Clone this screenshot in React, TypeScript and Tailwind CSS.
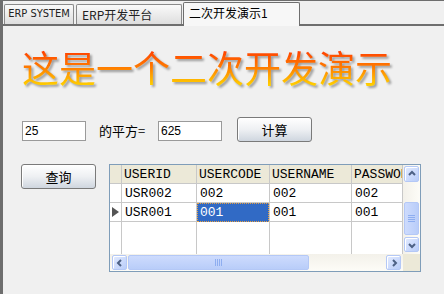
import React from "react"

const cjk = { fontFamily: '"Noto Sans CJK SC", "Noto Sans", sans-serif' }
const mono = { fontFamily: '"Liberation Mono", "DejaVu Sans Mono", monospace' }
const tahoma = { fontFamily: '"DejaVu Sans Condensed", "Liberation Sans", "Noto Sans CJK SC", sans-serif' }

interface Column {
  title: string
  width: number
  rows: string[]
}

const columns: Column[] = [
  { title: "USERID", width: 75, rows: ["USR002", "USR001"] },
  { title: "USERCODE", width: 73, rows: ["002", "001"] },
  { title: "USERNAME", width: 82, rows: ["002", "001"] },
  { title: "PASSWORD", width: 51, rows: ["002", "001"] },
]

function Chevron({ dir }: { dir: "up" | "down" | "left" | "right" }) {
  const d = {
    up: "M2 6 L5 3 L8 6",
    down: "M2 4 L5 7 L8 4",
    left: "M6 2 L3 5 L6 8",
    right: "M4 2 L7 5 L4 8",
  }[dir]
  return (
    <svg width="10" height="10" viewBox="0 0 10 10">
      <path d={d} fill="none" stroke="#4d6185" strokeWidth="2" />
    </svg>
  )
}

function ScrollButton({ dir, className }: { dir: "up" | "down" | "left" | "right"; className: string }) {
  return (
    <div
      className={`flex items-center justify-center rounded-[2px] border border-[#b4c8f6] bg-linear-to-br from-[#e3ebff] to-[#b9cdf9] shadow-[inset_1px_1px_0_#fff] ${className}`}
    >
      <Chevron dir={dir} />
    </div>
  )
}

function XpButton({ label }: { label: string }) {
  return (
    <button
      className="flex h-[25px] w-[75px] items-center justify-center rounded-[3px] border border-[#7a7a7a] bg-linear-to-b from-[#ffffff] via-[#eef0f3] to-[#cfd6df] text-[13px] text-black shadow-[inset_1px_1px_0_#fff]"
      style={cjk}
    >
      {label}
    </button>
  )
}

function DataGrid() {
  return (
    <div className="ml-[13px] flex h-[108px] w-[312px] flex-col border border-[#7f9db9] bg-white">
      <div className="flex h-[89px]">
        {/* cells */}
        <div className="flex w-[293px] overflow-hidden">
          {/* indicator column */}
          <div className="flex w-[12px] shrink-0 flex-col border-r border-[#c8c8c8]">
            <div className="h-[19px] border-b border-[#c8c8c8] bg-[#ece9d8]" />
            <div className="h-[19px] border-b border-[#c8c8c8]" />
            <div className="flex h-[19px] items-center border-b border-[#c8c8c8] pl-[2px]">
              <svg width="7" height="10" viewBox="0 0 7 10">
                <path d="M0 0 L7 5 L0 10 Z" fill="#555" />
              </svg>
            </div>
            <div className="flex-1" />
          </div>
          {columns.map((col, ci) => (
            <div
              key={col.title}
              className="flex shrink-0 flex-col border-r border-[#c8c8c8]"
              style={{ width: col.width }}
            >
              <div
                className="h-[19px] overflow-hidden whitespace-nowrap border-b border-[#c8c8c8] bg-[#ece9d8] pl-[2px] text-[13px] leading-[19px] text-black"
                style={mono}
              >
                {col.title}
              </div>
              {col.rows.map((v, ri) =>
                ri === 1 && ci === 1 ? (
                  <div
                    key={ri}
                    className="h-[19px] border border-dotted border-[#e8a040] bg-[#316ac5] pl-[2px] text-[13px] leading-[17px] text-white"
                    style={mono}
                  >
                    {v}
                  </div>
                ) : (
                  <div
                    key={ri}
                    className="h-[19px] border-b border-[#c8c8c8] pl-[3px] text-[13px] leading-[19px] text-black"
                    style={mono}
                  >
                    {v}
                  </div>
                )
              )}
              <div className="flex-1" />
            </div>
          ))}
        </div>
        {/* vertical scrollbar */}
        <div className="flex w-[17px] flex-col bg-linear-to-r from-[#f3f1ea] to-[#fdfcf7] px-[1px] pt-[1px]">
          <ScrollButton dir="up" className="h-[16px]" />
          <div className="h-[20px]" />
          <div className="flex h-[33px] flex-col items-center justify-center gap-[1px] rounded-[2px] border border-[#b4c8f6] bg-linear-to-r from-[#cddbfd] to-[#b9cdf9]">
            <div className="h-px w-[7px] bg-[#8eaef0]" />
            <div className="h-px w-[7px] bg-[#8eaef0]" />
            <div className="h-px w-[7px] bg-[#8eaef0]" />
            <div className="h-px w-[7px] bg-[#8eaef0]" />
          </div>
          <div className="flex-1" />
          <ScrollButton dir="down" className="mb-[2px] h-[15px]" />
        </div>
      </div>
      {/* horizontal scrollbar */}
      <div className="flex h-[17px]">
        <div className="flex w-[293px] bg-linear-to-b from-[#f3f1ea] to-[#fdfcf7] px-[2px] pb-[1px] pt-[1px]">
          <ScrollButton dir="left" className="w-[15px]" />
          <div className="ml-[1px] flex w-[181px] items-center justify-center gap-[1px] rounded-[2px] border border-[#b4c8f6] bg-linear-to-b from-[#cddbfd] to-[#b9cdf9]">
            <div className="h-[7px] w-px bg-[#8eaef0]" />
            <div className="h-[7px] w-px bg-[#8eaef0]" />
            <div className="h-[7px] w-px bg-[#8eaef0]" />
            <div className="h-[7px] w-px bg-[#8eaef0]" />
          </div>
          <div className="flex-1" />
          <ScrollButton dir="right" className="w-[15px]" />
        </div>
        <div className="w-[17px] bg-[#ece9d8]" />
      </div>
    </div>
  )
}

export default function App() {
  return (
    <div className="flex h-[294px] w-[444px] flex-col overflow-hidden border-l-[3px] border-t border-[#6e6e6e] bg-[#f0f0f0]">
      {/* tab strip */}
      <div className="flex h-[25px] items-end border-b-2 border-[#6e6e6e] pl-[1px]">
        <div
          className="flex h-[20px] w-[70px] items-center justify-center rounded-t-[2px] border border-b-0 border-[#8a8a8a] bg-linear-to-b from-[#fafafa] to-[#dedede] text-[11px] text-[#222]"
          style={tahoma}
        >
          ERP SYSTEM
        </div>
        <div
          className="ml-[2px] flex h-[20px] w-[106px] items-center rounded-t-[2px] border border-b-0 border-[#8a8a8a] bg-linear-to-b from-[#fafafa] to-[#dedede] pl-[5px] text-[12px] text-[#222]"
          style={cjk}
        >
          ERP开发平台
        </div>
        <div
          className="relative ml-[1px] -mb-[2px] flex h-[24px] w-[117px] items-start rounded-t-[2px] border border-b-0 border-[#6e6e6e] bg-[#f7f7f7] pl-[5px] pt-[3px] text-[12px] leading-[14px] text-black"
          style={cjk}
        >
          二次开发演示1
        </div>
      </div>

      {/* panel */}
      <div className="flex flex-col pl-[19px]">
        <div
          className="mt-[22px] h-[38px] self-start bg-linear-to-b from-[#ff2a00] via-[#ff7a00] to-[#ffd200] bg-clip-text text-[37px] leading-[38px] text-transparent drop-shadow-[2px_2px_1px_rgba(0,0,0,0.35)]"
          style={cjk}
        >
          这是一个二次开发演示
        </div>

        <div className="mt-[31px] flex items-start">
          <div
            className="mt-[4px] h-[20px] w-[64px] border border-[#9a9a9a] bg-white pl-[2px] text-[12px] leading-[18px] text-black"
            style={{ fontFamily: '"Liberation Sans", sans-serif' }}
          >
            25
          </div>
          <div className="ml-[13px] mt-[4px] w-[59px] text-[13px] leading-[20px] text-black" style={cjk}>
            的平方=
          </div>
          <div
            className="mt-[4px] h-[20px] w-[64px] border border-[#9a9a9a] bg-white pl-[2px] text-[12px] leading-[18px] text-black"
            style={{ fontFamily: '"Liberation Sans", sans-serif' }}
          >
            625
          </div>
          <div className="ml-[15px]">
            <XpButton label="计算" />
          </div>
        </div>

        <div className="mt-[22px] flex items-start">
          <div className="-ml-[1px]">
            <XpButton label="查询" />
          </div>
          <DataGrid />
        </div>
      </div>
    </div>
  )
}
